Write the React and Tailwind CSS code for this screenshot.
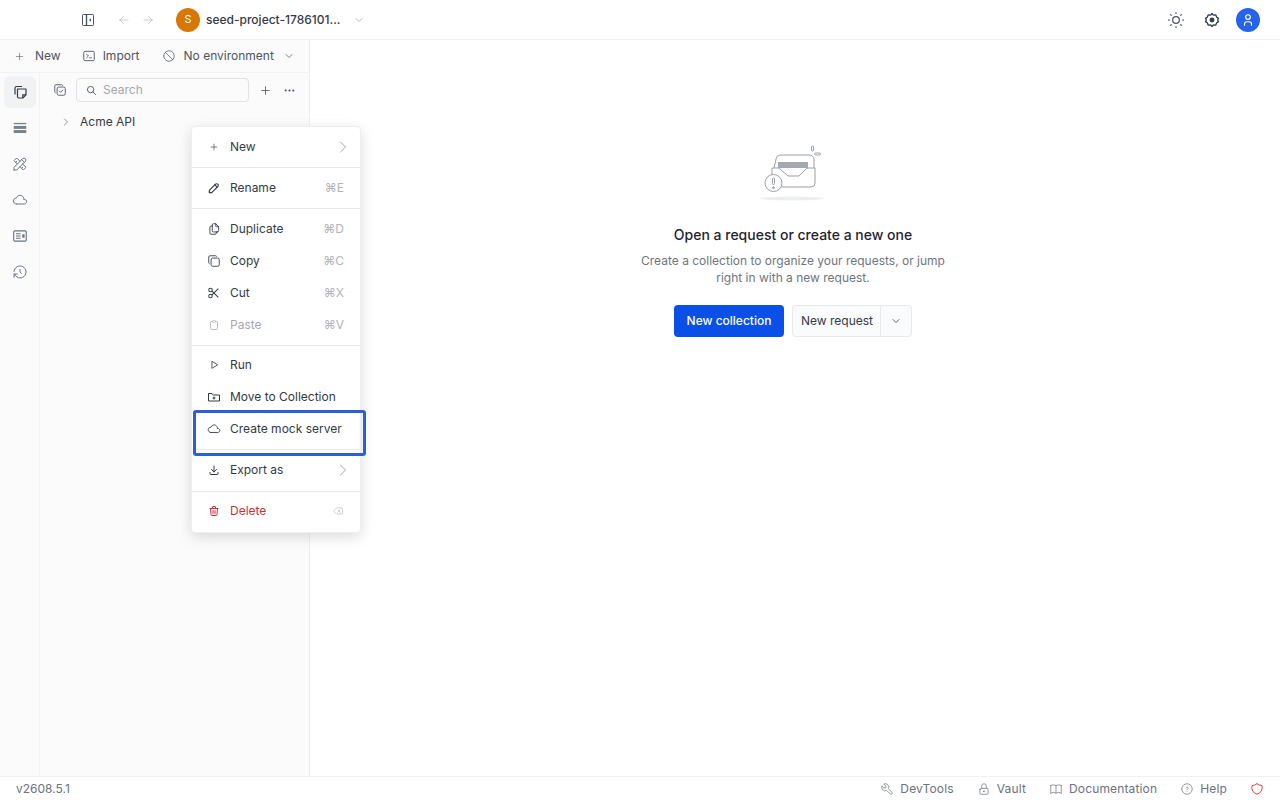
import React from 'react';
import {
  TbArrowLeft, TbArrowRight, TbBackspace, TbBan, TbBook, TbChevronDown, TbChevronRight, TbClipboard,
  TbCloud, TbCopy, TbCopyCheck, TbDots, TbDownload, TbHelpCircle, TbHistory, TbLock,
  TbPencil, TbPlayerPlay, TbPlus, TbScissors, TbSearch, TbShield, TbSun, TbTerminal2,
  TbTool, TbTools, TbTrash, TbUser, TbFiles,
} from 'react-icons/tb';

const FolderIcon = ({ className }) => (
  <svg className={className} viewBox="0 0 14 14" fill="none" stroke="currentColor" strokeWidth="1">
    <path d="M1.5 3.5h3.5l1.2 1.5h6.3v6h-11z" />
    <path d="M7 6.5v3M5.5 8h3" />
  </svg>
);

const BarsIcon = ({ className }) => (
  <svg className={className} viewBox="0 0 14 14" fill="#7b8089">
    <rect x="1.5" y="2.5" width="11" height="1.2" />
    <rect x="1.5" y="5.2" width="11" height="2.6" />
    <rect x="1.5" y="8.8" width="11" height="2.6" />
  </svg>
);

const CardIcon = ({ className }) => (
  <svg className={className} viewBox="0 0 14 14" fill="none" stroke="currentColor" strokeWidth="1">
    <rect x="1.5" y="2.5" width="11" height="9" rx="1" />
    <path d="M3.5 5h4M3.5 7h4M3.5 9h4" />
    <rect x="9" y="5.5" width="2" height="3" fill="currentColor" stroke="none" />
  </svg>
);

const CollectionsIcon = ({ className }) => (
  <svg className={className} viewBox="0 0 16 16" fill="none" stroke="currentColor" strokeWidth="1.2">
    <path d="M3 10.5V4.2A1.7 1.7 0 0 1 4.7 2.5H10" />
    <path d="M5.5 5h8.5v5.8L10.8 14H7a1.5 1.5 0 0 1-1.5-1.5z" strokeLinejoin="round" />
    <path d="M10.8 14v-3.2H14" />
  </svg>
);

const GearIcon = ({ className }) => (
  <svg className={className} viewBox="0 0 16 16" fill="none" stroke="currentColor" strokeWidth="1.2">
    <path d="M8 2.2l1.2 1.5 2.1-.3.8 2 1.7 1.1-.8 1.5.8 1.5-1.7 1.1-.8 2-2.1-.3L8 13.8l-1.2-1.5-2.1.3-.8-2-1.7-1.1.8-1.5-.8-1.5 1.7-1.1.8-2 2.1.3z" strokeLinejoin="round" />
    <circle cx="8" cy="8" r="2.2" fill="currentColor" stroke="none" />
  </svg>
);

const SidebarToggle = ({ className }) => (
  <svg className={className} viewBox="0 0 12 12" fill="none" stroke="#4b5563" strokeWidth="1">
    <rect x=".5" y=".5" width="11" height="11" rx=".8" />
    <path d="M4.5 .5v11" strokeWidth="1.4" />
    <path d="M9 4.2v3.6L7 6z" fill="#4b5563" stroke="none" />
  </svg>
);

const iconSizes = { sm: 'h-[10px] w-[10px]', md: 'h-3 w-3', lg: 'h-[14px] w-[14px]' };

function MenuRow({ icon: Icon, label, shortcut, arrow, disabled, danger, size = 'lg', strokeWidth = 1.5 }) {
  const color = danger ? 'text-[#c9303e]' : disabled ? 'text-[#a3a7af]' : 'text-[#343a46]';
  return (
    <div className={`flex h-8 items-center pl-[15px] pr-4 text-[12px] ${color}`}>
      <span className="mr-[9px] flex h-[14px] w-[14px] shrink-0 items-center justify-center">
        <Icon className={iconSizes[size]} strokeWidth={strokeWidth} />
      </span>
      <span className="whitespace-nowrap">{label}</span>
      {shortcut && <span className="ml-auto text-[12px] text-[#b0b4bb]">{shortcut}</span>}
      {arrow && <TbChevronRight className="ml-auto -mr-[9px] h-5 w-5 text-[#8f949c]" strokeWidth={1} />}
    </div>
  );
}

function RailIcon({ icon: Icon, active }) {
  return (
    <div className={`flex h-8 w-8 items-center justify-center rounded-md ${active ? 'bg-[#f1f2f4] text-[#343a46]' : 'text-[#6b7280]'}`}>
      <Icon className="h-4 w-4" strokeWidth={1.5} />
    </div>
  );
}

function FooterLink({ icon: Icon, label }) {
  return (
    <div className="flex items-center gap-[6px] text-[12px] tracking-[0.15px] text-[#6b7280]">
      <Icon className="h-[14px] w-[14px]" strokeWidth={1.25} />
      <span>{label}</span>
    </div>
  );
}

function EmptyBox() {
  return (
    <svg className="mr-[2px]" width="64" height="57" viewBox="0 0 64 57" fill="none" stroke="#9a9fa9" strokeWidth="1">
      <ellipse cx="32" cy="53.5" rx="32" ry="2" fill="#eceef0" stroke="none" />
      <path d="M14 23l2-9a4.5 4.5 0 0 1 4-4h29a4.5 4.5 0 0 1 5 4v9" />
      <rect x="18" y="17" width="30" height="6" fill="#a4a8b1" stroke="none" />
      <path d="M12 30v-7h7l9 8h11l8-8h8v15a4 4 0 0 1-4 4H21" fill="#fff" />
      <circle cx="13.5" cy="38" r="8.5" fill="#fff" />
      <rect x="12.5" y="33" width="2" height="6.5" rx="1" />
      <circle cx="13.5" cy="42.7" r=".9" fill="#9a9fa9" />
      <rect x="51.5" y="1" width="2" height="5" rx="1" />
      <rect x="54.5" y="8" width="6" height="2" rx="1" />
    </svg>
  );
}

export default function App() {
  return (
    <div className="relative flex h-[800px] w-[1280px] flex-col overflow-hidden bg-white font-['Inter',sans-serif]">
      {/* top bar */}
      <div className="flex h-10 shrink-0 items-center border-b border-[#eff0f2] pl-[82px] pr-[20px]">
        <SidebarToggle className="h-3 w-3" />
        <TbArrowLeft className="ml-[23px] h-[14px] w-[14px] text-[#b4b8bf]" strokeWidth={1.25} />
        <TbArrowRight className="ml-[10px] h-[14px] w-[14px] text-[#b4b8bf]" strokeWidth={1.25} />
        <div className="ml-[21px] flex h-6 w-6 items-center justify-center rounded-full bg-[#d97706] text-[11px] text-white">S</div>
        <span className="ml-[6px] text-[12px] font-medium text-[#343a46]">seed-project-1786101...</span>
        <TbChevronDown className="ml-[13px] h-3 w-3 text-[#9ca3af]" strokeWidth={1.5} />
        <div className="ml-auto flex items-center">
          <TbSun className="h-5 w-5 text-[#4b5563]" strokeWidth={1.5} />
          <GearIcon className="ml-[17px] h-[18px] w-[18px] text-[#374151]" />
          <div className="ml-[15px] flex h-6 w-6 items-center justify-center rounded-full bg-[#2563eb] text-white">
            <TbUser className="h-[14px] w-[14px]" strokeWidth={2} />
          </div>
        </div>
      </div>

      <div className="flex min-h-0 flex-1">
        {/* sidebar */}
        <div className="flex w-[310px] shrink-0 flex-col border-r border-[#eff0f2] bg-[#fbfbfc]">
          <div className="flex h-[32px] shrink-0 items-center pl-[14px] text-[12px] text-[#4b5563]">
            <TbPlus className="h-[11px] w-[11px] text-[#6b7280]" strokeWidth={1.5} />
            <span className="ml-[10px]">New</span>
            <TbTerminal2 className="ml-[21px] h-[14px] w-[14px]" strokeWidth={1.5} />
            <span className="ml-[7px]">Import</span>
            <TbBan className="ml-[22px] h-[14px] w-[14px]" strokeWidth={1.25} />
            <span className="ml-[8px]">No environment</span>
            <TbChevronDown className="ml-[9px] h-3 w-3" strokeWidth={1.5} />
          </div>
          <div className="flex min-h-0 flex-1 border-t border-[#f2f3f5]">
            <div className="flex w-10 shrink-0 flex-col items-center gap-1 border-r border-[#f2f3f5] pt-[3px]">
              <RailIcon icon={CollectionsIcon} active />
              <RailIcon icon={BarsIcon} />
              <RailIcon icon={TbTools} />
              <RailIcon icon={TbCloud} />
              <RailIcon icon={CardIcon} />
              <RailIcon icon={TbHistory} />
            </div>
            <div className="flex-1">
              <div className="flex items-center pl-[13px] pt-[5px]">
                <TbCopyCheck className="h-[14px] w-[14px] text-[#4b5563]" strokeWidth={1.5} />
                <div className="ml-[9px] flex h-6 w-[173px] items-center rounded-[4px] border border-[#dfe1e5] pl-[9px] text-[12px] text-[#a3a7af]">
                  <TbSearch className="h-[11px] w-[11px] text-[#4b5563]" strokeWidth={2} />
                  <span className="ml-[6px]">Search</span>
                </div>
                <TbPlus className="ml-[10px] h-[13px] w-[13px] text-[#4b5563]" strokeWidth={1.5} />
                <TbDots className="ml-[11px] h-[13px] w-[13px] text-[#4b5563]" strokeWidth={2} />
              </div>
              <div className="flex items-center pl-[20px] pt-[11px] text-[12px] text-[#343a46]">
                <TbChevronRight className="h-3 w-3 text-[#6b7280]" strokeWidth={1.5} />
                <span className="ml-2">Acme API</span>
              </div>
            </div>
          </div>
        </div>

        {/* empty state */}
        <div className="flex flex-1 flex-col items-center pr-1 pt-[105px]">
          <EmptyBox />
          <h2 className="mt-[22px] text-[14px] font-medium text-[#1f2430]">Open a request or create a new one</h2>
          <p className="mt-[7px] w-[320px] text-center text-[12px] leading-[17px] text-[#6f7580]">
            Create a collection to organize your requests, or jump right in with a new request.
          </p>
          <div className="mt-[19px] flex items-center gap-2">
            <button className="h-8 w-[110px] rounded-[4px] bg-[#0a50e8] text-[12px] font-medium text-white">New collection</button>
            <div className="flex h-8 w-[120px] items-center rounded-[4px] border border-[#e7e9ec] bg-[#fafbfc] text-[12px] text-[#343a46]">
              <span className="flex-1 pl-2">New request</span>
              <span className="flex h-full w-[31px] items-center justify-center border-l border-[#e7e9ec]">
                <TbChevronDown className="h-3 w-3" strokeWidth={1.5} />
              </span>
            </div>
          </div>
        </div>
      </div>

      {/* status bar */}
      <div className="flex h-6 shrink-0 items-center border-t border-[#eff0f2] pl-4 pr-[16px] text-[12px] text-[#6b7280]">
        <span>v2608.5.1</span>
        <div className="ml-auto flex items-center gap-[23px]">
          <FooterLink icon={TbTool} label="DevTools" />
          <FooterLink icon={TbLock} label="Vault" />
          <FooterLink icon={TbBook} label="Documentation" />
          <FooterLink icon={TbHelpCircle} label="Help" />
          <TbShield className="h-[14px] w-[14px] text-[#dc2626]" strokeWidth={1.5} />
        </div>
      </div>

      {/* context menu */}
      <div className="absolute left-[191px] top-[126px] w-[170px] rounded-[4px] border border-[#eceef0] bg-white shadow-[0_4px_14px_rgba(0,0,0,0.14)]">
        <div className="border-b border-[#e8e9ec] pb-1 pt-[4px]">
          <MenuRow icon={TbPlus} label="New" arrow size="sm" />
        </div>
        <div className="border-b border-[#e8e9ec] py-1">
          <MenuRow icon={TbPencil} label="Rename" shortcut="⌘E" strokeWidth={2} />
        </div>
        <div className="border-b border-[#e8e9ec] py-1">
          <MenuRow icon={TbFiles} label="Duplicate" shortcut="⌘D" />
          <MenuRow icon={TbCopy} label="Copy" shortcut="⌘C" />
          <MenuRow icon={TbScissors} label="Cut" shortcut="⌘X" strokeWidth={1.75} />
          <MenuRow icon={TbClipboard} label="Paste" shortcut="⌘V" disabled size="md" />
        </div>
        <div className="border-b border-[#e8e9ec] pb-1 pt-[3px]">
          <MenuRow icon={TbPlayerPlay} label="Run" size="sm" strokeWidth={2} />
          <MenuRow icon={FolderIcon} label="Move to Collection" />
          <MenuRow icon={TbCloud} label="Create mock server" />
        </div>
        <div className="border-b border-[#e8e9ec] pb-[5px] pt-1">
          <MenuRow icon={TbDownload} label="Export as" arrow size="md" strokeWidth={2} />
        </div>
        <div className="pb-[5px] pt-[3px]">
          <MenuRow icon={TbTrash} label="Delete" danger size="md" strokeWidth={2} shortcut={<TbBackspace className="h-3 w-3" strokeWidth={1.25} />} />
        </div>
      </div>

      {/* highlight box */}
      <div className="absolute left-[193px] top-[410px] h-[46px] w-[173px] rounded-[3px] border-[3px] border-[#2a5fd8]" />
    </div>
  );
}
